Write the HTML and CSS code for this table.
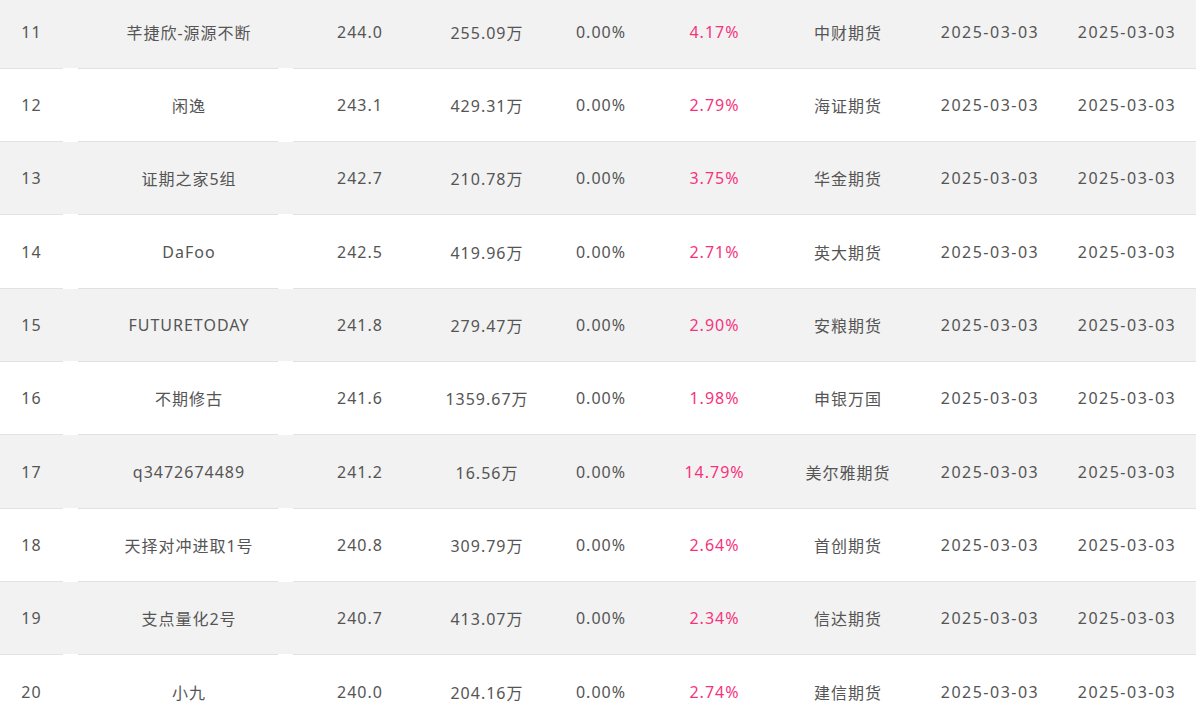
FILE: index.html
```html
<!DOCTYPE html>
<html lang="zh-CN">
<head>
<meta charset="utf-8">
<title>排行榜</title>
<link rel="stylesheet" href="styles.css">
</head>
<body>
<div class="table">
  <div class="row shade"><div class="c">11</div><div class="g"></div><div class="c name">芊捷欣-源源不断</div><div class="g"></div><div class="c">244.0</div><div class="c">255.09万</div><div class="c">0.00%</div><div class="c pink">4.17%</div><div class="c">中财期货</div><div class="c date">2025-03-03</div><div class="c date">2025-03-03</div></div>
  <div class="row"><div class="c">12</div><div class="g"></div><div class="c name">闲逸</div><div class="g"></div><div class="c">243.1</div><div class="c">429.31万</div><div class="c">0.00%</div><div class="c pink">2.79%</div><div class="c">海证期货</div><div class="c date">2025-03-03</div><div class="c date">2025-03-03</div></div>
  <div class="row shade"><div class="c">13</div><div class="g"></div><div class="c name">证期之家5组</div><div class="g"></div><div class="c">242.7</div><div class="c">210.78万</div><div class="c">0.00%</div><div class="c pink">3.75%</div><div class="c">华金期货</div><div class="c date">2025-03-03</div><div class="c date">2025-03-03</div></div>
  <div class="row"><div class="c">14</div><div class="g"></div><div class="c name">DaFoo</div><div class="g"></div><div class="c">242.5</div><div class="c">419.96万</div><div class="c">0.00%</div><div class="c pink">2.71%</div><div class="c">英大期货</div><div class="c date">2025-03-03</div><div class="c date">2025-03-03</div></div>
  <div class="row shade"><div class="c">15</div><div class="g"></div><div class="c name">FUTURETODAY</div><div class="g"></div><div class="c">241.8</div><div class="c">279.47万</div><div class="c">0.00%</div><div class="c pink">2.90%</div><div class="c">安粮期货</div><div class="c date">2025-03-03</div><div class="c date">2025-03-03</div></div>
  <div class="row"><div class="c">16</div><div class="g"></div><div class="c name">不期修古</div><div class="g"></div><div class="c">241.6</div><div class="c">1359.67万</div><div class="c">0.00%</div><div class="c pink">1.98%</div><div class="c">申银万国</div><div class="c date">2025-03-03</div><div class="c date">2025-03-03</div></div>
  <div class="row shade"><div class="c">17</div><div class="g"></div><div class="c name">q3472674489</div><div class="g"></div><div class="c">241.2</div><div class="c">16.56万</div><div class="c">0.00%</div><div class="c pink">14.79%</div><div class="c">美尔雅期货</div><div class="c date">2025-03-03</div><div class="c date">2025-03-03</div></div>
  <div class="row"><div class="c">18</div><div class="g"></div><div class="c name">天择对冲进取1号</div><div class="g"></div><div class="c">240.8</div><div class="c">309.79万</div><div class="c">0.00%</div><div class="c pink">2.64%</div><div class="c">首创期货</div><div class="c date">2025-03-03</div><div class="c date">2025-03-03</div></div>
  <div class="row shade"><div class="c">19</div><div class="g"></div><div class="c name">支点量化2号</div><div class="g"></div><div class="c">240.7</div><div class="c">413.07万</div><div class="c">0.00%</div><div class="c pink">2.34%</div><div class="c">信达期货</div><div class="c date">2025-03-03</div><div class="c date">2025-03-03</div></div>
  <div class="row"><div class="c">20</div><div class="g"></div><div class="c name">小九</div><div class="g"></div><div class="c">240.0</div><div class="c">204.16万</div><div class="c">0.00%</div><div class="c pink">2.74%</div><div class="c">建信期货</div><div class="c date">2025-03-03</div><div class="c date">2025-03-03</div></div>
</div>
</body>
</html>
```
FILE: styles.css
```css
html, body {
  margin: 0;
  padding: 0;
  background: #ffffff;
}
body {
  font-family: "Noto Sans", "Noto Sans CJK SC", sans-serif;
  font-size: 16px;
  color: #555555;
  overflow: hidden;
}
.table {
  margin-top: -4.5px;
}
.row {
  display: grid;
  grid-template-columns: 63px 15px 200px 15px 134px 120px 108px 119px 148px 136px 138px;
  background: #ffffff;
}
.row.shade {
  background: #f2f2f2;
}
.c {
  height: 72.33px;
  display: flex;
  align-items: center;
  justify-content: center;
  white-space: nowrap;
  letter-spacing: 1px;
  border-bottom: 1px solid #e2e2e2;
}
.g {
  height: 72.33px;
  border-bottom: 1px solid #ffffff;
}
.c.name {
  padding-left: 22px;
  border-bottom-color: #dde0e7;
}
.c.date {
  letter-spacing: 1.5px;
}
.c.pink {
  color: #f7327d;
}
```
